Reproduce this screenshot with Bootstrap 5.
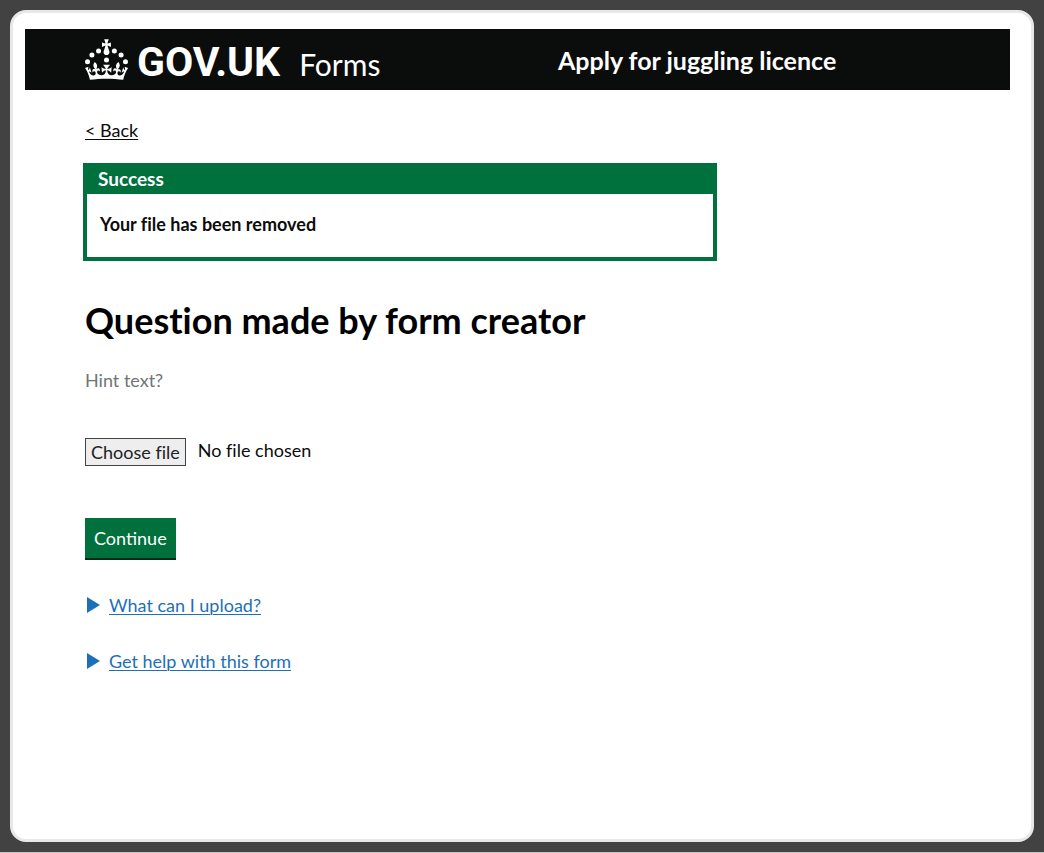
<!DOCTYPE html>
<html lang="en">
<head>
<meta charset="utf-8">
<meta name="viewport" content="width=device-width, initial-scale=1">
<title>Apply for juggling licence – GOV.UK Forms</title>
<link href="https://cdn.jsdelivr.net/npm/bootstrap@5.3.0/dist/css/bootstrap.min.css" rel="stylesheet">
<style>
  body { background: #424242; color: #0b0c0c; font: 18px/24px Lato, "Liberation Sans", sans-serif; font-variant-ligatures: none; border-bottom: 1px solid #c4c4c4; }
  .page-frame { background: #fff; border: 3px solid #e8e8e8; border-radius: 16px; margin: 10px; padding: 16px 21px 16px 12px; }
  .site-header { background: #0b0c0c; color: #fff; min-height: 61px; padding-left: 60px; }
  .brand { width: 473px; gap: 9px; }
  .wordmark { font: 700 41px/48px Roboto, sans-serif; padding-top: 4px; }
  .product { font-size: 30px; line-height: 40px; padding: 8px 0 0 10px; }
  .service { font-size: 25px; line-height: 32px; font-weight: 700; }
  .page-main { padding: 28px 0 0 60px; }
  .back { color: #0b0c0c; text-underline-offset: 2px; text-decoration-thickness: 1px; }
  .notice { max-width: 634px; border: 4px solid #00703c; margin: 21px 0 0 -2px; }
  .notice h2 { background: #00703c; color: #fff; font-size: 19px; line-height: 24px; font-weight: 700; margin: 0; padding: 0 11px 3px; }
  .notice p { font-weight: 700; margin: 0; padding: 18px 13px 21px; }
  h1 { font-size: 36px; line-height: 44px; font-weight: 700; margin: 37px 0 0; color: #000; }
  .hint { color: #6f7577; margin: 26px 0 46px; }
  .upload { gap: 12px; }
  .choose { background: #eee; color: #222; border: 1px solid #444; padding: 1px 5px; cursor: pointer; }
  .visually-hidden:focus + .choose { outline: 3px solid #fd0; }
  .continue { background: #00703c; color: #fff; border: 0; border-bottom: 2px solid #002d18; border-radius: 0; font-size: 18px; line-height: 24px; padding: 8px 9px; margin: 52px 0 33px; display: block; }
  .continue:hover { background: #005a30; color: #fff; }
  summary { list-style: none; color: #1d70b8; display: flex; align-items: center; gap: 9px; margin-bottom: 32px; width: fit-content; }
  summary span { text-decoration: underline; text-decoration-thickness: 1px; text-underline-offset: 2px; }
  summary svg { margin-left: 2px; }
</style>
</head>
<body class="d-flex flex-column min-vh-100">
<div class="page-frame flex-grow-1">
  <header class="site-header d-flex align-items-center">
    <div class="brand d-flex align-items-center flex-shrink-0">
      <svg width="43" height="41" viewBox="0 0 63.4 60" fill="#fff" aria-hidden="true">
        <circle cx="20" cy="17.6" r="3.7"/><circle cx="10.2" cy="23.5" r="3.7"/><circle cx="3.7" cy="33.2" r="3.7"/>
        <circle cx="31.7" cy="30.6" r="3.7"/><circle cx="43.3" cy="17.6" r="3.7"/><circle cx="53.2" cy="23.5" r="3.7"/><circle cx="59.7" cy="33.2" r="3.7"/>
        <path d="M33.1,9.8c.2-.1.3-.3.5-.5l4.6,2.4v-6.8l-4.6,1.5c-.1-.2-.3-.3-.5-.5l1.9-5.9h-6.7l1.9,5.9c-.2.1-.3.3-.5.5l-4.6-1.5v6.8l4.6-2.4c.1.2.3.3.5.5l-2.6,8c-.9,2.8,1.2,5.7,4.1,5.7h0c3,0,5.1-2.9,4.1-5.7l-2.6-8ZM37,37.9s-3.4,3.8-4.1,6.1c2.2,0,4.2-.5,6.4-2.8l-.7,8.5c-2-2.8-4.4-4.1-5.7-3.8.1,3.1.5,6.7,5.8,7.2,3.7.3,6.7-1.5,7-3.8.4-2.6-2-4.3-3.7-1.6-1.4-4.5,2.4-6.1,4.9-3.2-1.9-4.5-1.8-7.7,2.4-10.9,3,4,2.6,7.3-1.2,11.1,2.4-1.3,6.2,0,4,4.6-1.2-2.8-3.7-2.2-4.2.2-.3,1.7.7,3.7,3,4.2,1.9.3,4.7-.9,7-5.9-1.3,0-2.4.7-3.9,1.7l2.4-8c.6,2.3,1.4,3.7,2.2,4.5.6-1.6.5-2.8,0-5.3l5,1.8c-2.6,3.6-5.2,8.7-7.3,17.5-7.4-1.1-15.7-1.7-24.5-1.7h0c-8.8,0-17.1.6-24.5,1.7-2.1-8.9-4.7-13.9-7.3-17.5l5-1.8c-.5,2.5-.6,3.7,0,5.3.8-.8,1.6-2.3,2.2-4.5l2.4,8c-1.5-1-2.6-1.7-3.9-1.7,2.3,5,5.2,6.2,7,5.9,2.3-.4,3.3-2.4,3-4.2-.5-2.4-3-3.1-4.2-.2-2.2-4.6,1.6-6,4-4.6-3.7-3.7-4.2-7.1-1.2-11.1,4.2,3.2,4.3,6.4,2.4,10.9,2.5-2.8,6.3-1.3,4.9,3.2-1.8-2.7-4.1-1-3.7,1.6.3,2.3,3.3,4.1,7,3.8,5.4-.5,5.7-4.2,5.8-7.2-1.3-.2-3.7,1-5.7,3.8l-.7-8.5c2.2,2.3,4.2,2.7,6.4,2.8-.7-2.3-4.1-6.1-4.1-6.1h10.6,0Z"/>
      </svg>
      <span class="wordmark">GOV.UK</span>
      <span class="product">Forms</span>
    </div>
    <div class="service">Apply for juggling licence</div>
  </header>
  <main class="page-main">
    <a class="back" href="#">&lt; Back</a>
    <section class="notice" role="alert">
      <h2>Success</h2>
      <p>Your file has been removed</p>
    </section>
    <form>
      <h1>Question made by form creator</h1>
      <p class="hint" id="file-hint">Hint text?</p>
      <div class="upload d-flex align-items-start position-relative">
        <input class="visually-hidden" type="file" id="file" aria-describedby="file-hint file-status">
        <label class="choose" for="file">Choose file</label>
        <span id="file-status">No file chosen</span>
      </div>
      <button class="btn continue" type="submit">Continue</button>
    </form>
    <details>
      <summary><svg width="13" height="16" viewBox="0 0 13 16" fill="#1d70b8" aria-hidden="true"><path d="M0 0L13 8L0 16Z"/></svg><span>What can I upload?</span></summary>
    </details>
    <details>
      <summary><svg width="13" height="16" viewBox="0 0 13 16" fill="#1d70b8" aria-hidden="true"><path d="M0 0L13 8L0 16Z"/></svg><span>Get help with this form</span></summary>
    </details>
  </main>
</div>
<script src="https://cdn.jsdelivr.net/npm/bootstrap@5.3.0/dist/js/bootstrap.bundle.min.js"></script>
</body>
</html>
